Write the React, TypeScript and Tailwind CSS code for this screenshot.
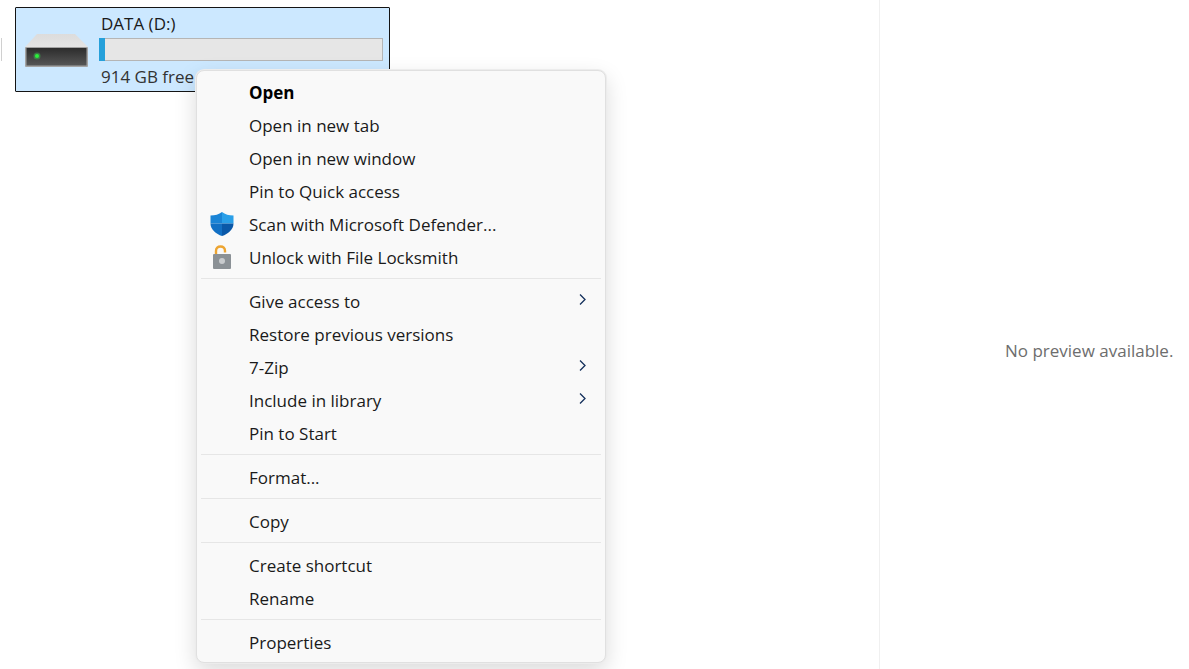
const FONT = "font-['Open_Sans','Noto_Sans',sans-serif]";

type Item = { label: string; bold?: boolean; icon?: "shield" | "lock"; arrow?: boolean };

const groups: Item[][] = [
    [
        { label: "Open", bold: true },
        { label: "Open in new tab" },
        { label: "Open in new window" },
        { label: "Pin to Quick access" },
        { label: "Scan with Microsoft Defender...", icon: "shield" },
        { label: "Unlock with File Locksmith", icon: "lock" },
    ],
    [
        { label: "Give access to", arrow: true },
        { label: "Restore previous versions" },
        { label: "7-Zip", arrow: true },
        { label: "Include in library", arrow: true },
        { label: "Pin to Start" },
    ],
    [{ label: "Format..." }],
    [{ label: "Copy" }],
    [{ label: "Create shortcut" }, { label: "Rename" }],
    [{ label: "Properties" }],
];

const DriveIcon = () => (
    <svg width="64" height="34" viewBox="0 0 64 34">
        <defs>
            <linearGradient id="lid" x1="0" y1="0" x2="0" y2="1">
                <stop offset="0" stopColor="#dcdcdc" />
                <stop offset="1" stopColor="#e4e4e4" />
            </linearGradient>
            <linearGradient id="front" x1="0" y1="0" x2="0" y2="1">
                <stop offset="0" stopColor="#2c2c2c" />
                <stop offset="1" stopColor="#565656" />
            </linearGradient>
        </defs>
        <path d="M12 0 H50 L63 13 H0 Z" fill="url(#lid)" />
        <rect x="0" y="13" width="63" height="20" rx="1" fill="#a3a3a3" />
        <rect x="1.5" y="14" width="60" height="17.5" fill="url(#front)" />
        <circle cx="12" cy="22" r="3.5" fill="#39d353" opacity="0.4" />
        <circle cx="12" cy="22" r="2" fill="#2bf03a" />
    </svg>
);

const ShieldIcon = () => (
    <svg width="24" height="25" viewBox="0 0 24 25">
        <path d="M12 0.5 C15 3 19 4 23.5 4 V12 H12 Z" fill="#2a9fe8" />
        <path d="M12 0.5 C9 3 5 4 0.5 4 V12 H12 Z" fill="#1a84d6" />
        <path d="M12 12 H23.5 C23.5 18 18 22.5 12 24.5 Z" fill="#0a58a8" />
        <path d="M0.5 12 H12 V24.5 C6 22.5 0.5 18 0.5 12 Z" fill="#1270c4" />
    </svg>
);

const LockIcon = () => (
    <svg width="20" height="24" viewBox="0 0 20 24">
        <path d="M4 10 V6 C4 3 5.8 1.5 8.5 1.5 C11.2 1.5 13 3 13 6 V7.5" fill="none" stroke="#eda532" strokeWidth="2.4" />
        <rect x="1" y="9" width="18" height="15" rx="1" fill="#8b9196" />
        <circle cx="10" cy="16" r="3" fill="#c8cbce" />
    </svg>
);

const Chevron = () => (
    <svg width="7" height="11" viewBox="0 0 7 11" className="-mt-[3px]">
        <path d="M1 0.5 L6 5.5 L1 10.5" fill="none" stroke="#14305c" strokeWidth="1.3" />
    </svg>
);

const MenuRow = ({ item }: { item: Item }) => (
    <div className="relative flex h-[33px] items-center pl-[52px] pr-[19px]">
        {item.icon && (
            <span className="absolute left-[13px] top-1/2 flex w-[24px] -translate-y-1/2 justify-center">
                {item.icon === "shield" ? <ShieldIcon /> : <LockIcon />}
            </span>
        )}
        <span className={`flex-1 whitespace-nowrap text-[17px] leading-none text-[#1a1a1a] ${item.bold ? "font-bold text-black" : ""}`}>
            {item.label}
        </span>
        {item.arrow && <Chevron />}
    </div>
);

const App = () => {
    return (
        <div className={`relative flex h-[669px] w-[1189px] overflow-hidden bg-white ${FONT}`}>
            {/* File list */}
            <div className="relative w-[879px] shrink-0 pl-[15px] pt-[7px]">
                <div className="flex h-[85px] w-[375px] items-start rounded-[1px] border border-[#141414] bg-[#cce8ff] pl-[9px] pr-[6px]">
                    <div className="mt-[26px] w-[66px] shrink-0">
                        <DriveIcon />
                    </div>
                    <div className="ml-[8px] flex-1 pt-[4px]">
                        <div className="pl-[2px] text-[17px] leading-[23px] text-[#1a1a1a]">DATA (D:)</div>
                        <div className="mt-[3px] h-[23px] border border-[#b5b5b5] bg-[#e6e6e6]">
                            <div className="-ml-px -mt-px h-[23px] w-[6px] bg-[#26a0da]" />
                        </div>
                        <div className="mt-[4px] pl-[2px] text-[17px] leading-[23px] text-[#333]">914 GB free</div>
                    </div>
                </div>

                {/* Cut off row marker at the left edge */}
                <div className="absolute left-0 top-[38px] h-[23px] w-[2px] border-r border-[#d0d0d0]" />
            </div>

            {/* Preview pane */}
            <div className="flex flex-1 items-center justify-center border-l border-[#f0f0f0] pl-[125px] pr-[18px]">
                <span className="mt-[33px] whitespace-nowrap text-[17px] text-[#6d6d6d]">No preview available.</span>
            </div>

            {/* Context menu */}
            <div className="absolute left-[196px] top-[70px] w-[410px] rounded-[8px] border border-[#e0e0e0] bg-[#f9f9f9] pb-[3px] pt-[4.5px] shadow-[0_0_0_1px_#ececec,0_8px_22px_rgba(0,0,0,0.15)]">
                {groups.map((group, i) => (
                    <div key={i}>
                        {i > 0 && (
                            <div className="flex h-[11px] items-start px-[4px] pt-[4px]">
                                <div className="h-px w-full bg-[#e6e6e6]" />
                            </div>
                        )}
                        {group.map((item) => (
                            <MenuRow key={item.label} item={item} />
                        ))}
                    </div>
                ))}
            </div>
        </div>
    );
};

export default App;
